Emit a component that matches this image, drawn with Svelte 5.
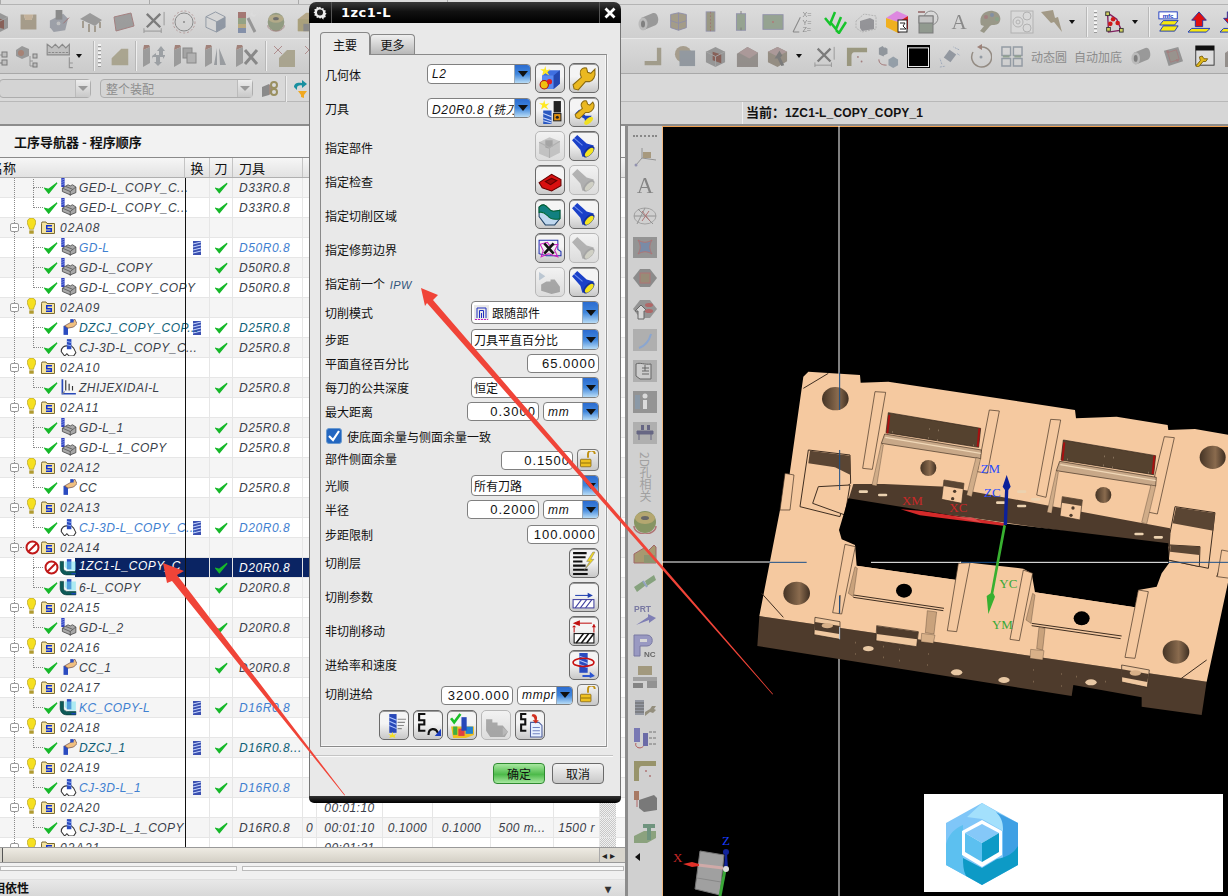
<script>
	// icon shapes, all drawn on a 24x24 box
	const I = {
		cyl: '<path d="M5 8 17 3a4.500 6.500 0 0 1 3 12L8 20z" fill="#8b8b8b"/><ellipse cx="7" cy="14" rx="4.500" ry="6.500" fill="#b5b5b5"/><ellipse cx="7" cy="14" rx="2" ry="3.500" fill="#6b6b6b"/>',
		box: '<path d="M2 3h4l2 7h8l2-7h4v19H2z" fill="#a08d6c"/><path d="M6 3h12l-2 7H8z" fill="#c9a77a"/>',
		info: '<path d="M3 11 17 4l5 5-3 12-12 2-4-5z" fill="#8d93a3"/><rect x="9" y="0" width="7" height="10" fill="#777"/><circle cx="12" cy="14" r="2" fill="#bbb"/><path d="M17 14 23 8" stroke="#a55" fill="none"/>',
		surf: '<path d="M1 9 11 3l12 7-7 6z" fill="#8c8c8c"/><path d="M4 11v7M10 14v8M16 16v6M21 12v6" stroke="#8a7a5a" stroke-width="1.500"/>',
		plane: '<path d="M3 7 20 3l3 13-18 5z" fill="#8f8f8f" stroke="#a66" stroke-width="1"/>',
		xdim: '<path d="M4 4 18 18M18 4 4 18" stroke="#666" stroke-width="2.500"/><path d="M22 2v14M1 22h18M1 19v5M19 19v5" stroke="#888" fill="none"/>',
		circ: '<circle cx="12" cy="12" r="9" fill="none" stroke="#777"/><circle cx="12" cy="12" r="11" fill="none" stroke="#b88" stroke-dasharray="2 2"/><circle cx="12" cy="12" r="1" fill="#777"/>',
		wire: '<path d="M2 7 12 2l10 5v11l-9 5-11-5z" fill="#d6d6d6" stroke="#7a8aa0"/><path d="M13 12 22 7v11l-9 5z" fill="#7a8aa0"/><path d="M2 7l11 5v11" fill="none" stroke="#7a8aa0"/>',
		wand: '<rect x="3" y="2" width="8" height="6" fill="#b05a50"/><rect x="3" y="8" width="8" height="6" fill="#7d9a60"/><rect x="3" y="14" width="8" height="4" fill="#c0a050"/><rect x="3" y="18" width="8" height="5" fill="#6a80b0"/><path d="M13 8 20 22" stroke="#888" stroke-width="3"/><path d="M15 5l2-4 1 4 4-1-3 3" fill="#ddd"/>',
		torus: '<ellipse cx="12" cy="12" rx="10" ry="11" fill="#7f8f60"/><ellipse cx="12" cy="8" rx="9" ry="5" fill="#b0a060"/><ellipse cx="12" cy="8" rx="3.500" ry="2" fill="#555"/><path d="M2 16a10 7 0 0 0 20 0" fill="none" stroke="#a66"/>',
		ocube: '<path d="M2 9 11 2h11v14l-8 6H2z" fill="#b59a60"/><path d="M2 9h12v13H2z" fill="#a5954f"/><path d="M8 14h6v8H8z" fill="#777"/>',
		tree: '<rect x="2" y="2" width="6" height="5" fill="#777"/><path d="M11 5v14h5M11 11h5M11 19h5" fill="none" stroke="#888"/><rect x="16" y="8" width="5" height="5" fill="#bbb" stroke="#666"/><rect x="16" y="16" width="5" height="5" fill="#bbb" stroke="#666"/>',
		tcube: '<path d="M1 6 7 2l7 3v7l-7 3-6-3z" fill="#8a8a8a"/><circle cx="6" cy="9" r="3" fill="#b06a50"/><path d="M15 12v10h3M15 17h3" fill="none" stroke="#888"/><rect x="18" y="10" width="4" height="4" fill="#bbb" stroke="#666"/><rect x="18" y="19" width="4" height="4" fill="#bbb" stroke="#666"/>',
		crown: '<path d="M1 2l4 3 3-3 3 3 3-3 3 3 3-3v9H1z" fill="#bbb" stroke="#777"/><path d="M2 9h17" stroke="#777" stroke-dasharray="2 1"/><path d="M20 13v9h3M20 18h3" fill="none" stroke="#888"/>',
		cham: '<path d="M3 22V14L14 3h8v19z" fill="#a49a72"/>',
		mv: '<path d="M1 6 8 3v16l-7 4z" fill="#8e8e8e"/><path d="M1 6 8 3l-1-2H2z" fill="#a56a5a"/><path d="M10 12 14 9v2h3V7h-2l4-5 4 5h-2v4h2v-2l0 3-2 3v-2h-3v5h2l-4 4-4-4h2v-5h-3v2z" fill="#8d949c"/>',
		cp: '<path d="M1 6 8 3v16l-7 4z" fill="#8e8e8e"/><path d="M1 6 8 3l-1-2H2z" fill="#a56a5a"/><rect x="10" y="4" width="9" height="10" fill="#999" stroke="#777"/><rect x="14" y="9" width="9" height="10" fill="#aaa" stroke="#777"/>',
		mir: '<path d="M1 6 8 3v16l-7 4z" fill="#8e8e8e"/><path d="M1 6 8 3l-1-2H2z" fill="#a56a5a"/><path d="M10 21l3-17v17zM15 4l1 17h6z" fill="#8a9098"/>',
		del: '<path d="M1 6 8 3v16l-7 4z" fill="#8e8e8e"/><path d="M1 6 8 3l-1-2H2z" fill="#a56a5a"/><path d="M10 6 22 20M22 6 10 20" stroke="#777" stroke-width="3"/>',
		xcham: '<path d="M1 2l8 8M9 2l-8 8" stroke="#b77" fill="none"/><path d="M6 23v-9l8-8h8v17z" fill="#a49a72"/>',
		pat: '<path d="M3 4 12 2l9 2v15l-9 3-9-3z" fill="#9d8f6a" stroke="#7a7ab0"/><path d="M12 2v20M3 11l9 3 9-3" stroke="#7a7ab0" fill="none"/>',
		bar: '<rect x="7" y="1" width="10" height="22" fill="#8d8a62" stroke="#8080b0"/><path d="M12 1v22" stroke="#a55" stroke-dasharray="2 2"/>',
		bar2: '<rect x="7" y="3" width="10" height="18" fill="#7f9a78" stroke="#8080b0"/><path d="M12 0v24" stroke="#666" stroke-dasharray="3 15"/>',
		rect: '<rect x="1" y="4" width="22" height="16" fill="#7f9a78" stroke="#8080b0"/><circle cx="12" cy="12" r="1" fill="#c55"/>',
		xyz: '<path d="M1 22 8 8M1 22h6" stroke="#777" fill="none"/><text x="10" y="8" font-size="7" fill="#777" font-family="Liberation Sans">X=</text><text x="10" y="15" font-size="7" fill="#777" font-family="Liberation Sans">Y=</text><text x="10" y="22" font-size="7" fill="#777" font-family="Liberation Sans">Z=</text>',
		checks: '<path d="M2 8l5 6L12 2M8 13l5 6 5-12M13 20l3 3 7-11" fill="none" stroke="#17c42c" stroke-width="2.500"/>',
		ghost: '<path d="M2 11 10 4l12 2v13l-14 3-6-4z" fill="none" stroke="#aaa" stroke-dasharray="2 1"/><path d="M6 11l10-3 4 2v9l-12 2-2-3z" fill="#84848c"/>',
		ccube: '<path d="M1 8 12 1l11 5-10 6z" fill="#dd88e0"/><path d="M1 8l12 4v11L1 17z" fill="#f0b020"/><path d="M13 12 23 6v13l-10 4z" fill="#d02020"/><rect x="13" y="10" width="9" height="12" fill="#fff" stroke="#222"/><path d="M15 13h5l-2 3 3 3h-6" fill="none" stroke="#222"/>',
		shapes: '<path d="M2 2h7" stroke="#a66" stroke-width="2"/><circle cx="15" cy="8" r="7" fill="none" stroke="#777"/><rect x="3" y="6" width="14" height="17" fill="#7d8e7a" stroke="#666"/><rect x="3" y="6" width="14" height="7" fill="#c0c0c0" stroke="#666"/>',
		A: '<text x="12" y="20" text-anchor="middle" font-size="23" fill="#777" font-family="Liberation Serif">A</text>',
		pal: '<path d="M3 15C0 5 8 0 15 1c7 1 9 8 6 12-3 3-7 1-9 3l-6 7-4-2 4-5z" fill="#8c8a6c"/><circle cx="8" cy="7" r="2" fill="#a66"/><circle cx="14" cy="5" r="2" fill="#667fa5"/><circle cx="19" cy="9" r="2" fill="#6a9a6a"/>',
		sheet: '<rect x="1" y="1" width="22" height="22" fill="#dadada" stroke="#aaa"/><circle cx="8" cy="12" r="5" fill="none" stroke="#aaa"/><circle cx="8" cy="12" r="2" fill="none" stroke="#aaa"/><circle cx="17" cy="6" r="4" fill="none" stroke="#aaa"/><circle cx="17" cy="18" r="4" fill="none" stroke="#aaa"/>',
		bolt: '<path d="M1 2 13 0l2 8 3-1 4 15-8-10-3 1z" fill="#9a8a64"/>',
		spline: '<path d="M5 2 15 9l5 12-14 2z" fill="none" stroke="#802060" stroke-width="1.500"/><rect x="3" y="1" width="4" height="4" fill="#d0d060" stroke="#333"/><rect x="4" y="18" width="4" height="4" fill="#d0d060" stroke="#333"/><rect x="18" y="19" width="4" height="4" fill="#d0d060" stroke="#333"/><circle cx="11" cy="9" r="2.500" fill="#d01818"/><circle cx="16" cy="13" r="2.500" fill="#d01818"/><circle cx="8" cy="14" r="2.500" fill="#d01818"/>',
		mfc: '<rect x="1" y="1" width="21" height="8" fill="#fff" stroke="#1030c0"/><text x="11.500" y="8" text-anchor="middle" font-size="7" font-weight="bold" fill="#1030c0" font-family="Liberation Sans">mfc</text><path d="M6 11h17l-4 5H2zM6 17h17l-4 6H2z" fill="#f6e810" stroke="#1030c0"/>',
		up: '<path d="M12 1 20 10h-4v7H8v-7H4z" fill="#e01010" stroke="#2030a0"/><path d="M4 19h20l-4 4H0z" fill="#f6e810" stroke="#1030c0"/>',
		dn: '<path d="M8 1h8v7h4l-8 9-8-9h4z" fill="#e01010" stroke="#2030a0"/><path d="M4 19h20l-4 4H0z" fill="#f6e810" stroke="#1030c0"/>',
		L: '<path d="M17 2h5v20H3v-5h14z" fill="#9a9070"/>',
		disc: '<circle cx="10" cy="10" r="9" fill="#a09070"/><rect x="6" y="6" width="17" height="17" fill="#7f8c9a"/>',
		rcube: '<path d="M2 7 12 2l10 5v11l-10 5-10-5z" fill="#888"/><path d="M9 7l9 3v9l-9-3z" fill="#8a4030"/><path d="M2 7l10 5v11M22 7l-10 5" stroke="#999" fill="none"/>',
		wr: '<path d="M2 7 12 2l10 5v10l-10 6-10-5z" fill="#8a7c68"/><path d="M12 2l10 5-10 5-10-5z" fill="#a88"/><path d="M14 6l3 5-2 2 4 8-3 1-4-8-3 0z" fill="#666"/>',
		corner: '<path d="M1 3h22v5H9c-2 0-3 2-3 4v11H1z" fill="#8f8a5a"/><circle cx="13" cy="13" r="1" fill="#a66"/><circle cx="17" cy="18" r="1" fill="#a66"/>',
		swap: '<path d="M3 3l4-2 3 4-2 7-5-2zM9 2l3 2 0 5-4 2z" fill="#7d8894"/><path d="M13 15l5-3 5 3v6l-5 3-5-3z" fill="#8094a6"/><path d="M3 15c0 5 4 6 8 6" stroke="#a55" fill="none"/>',
		blk: '<rect x="0" y="0" width="24" height="24" fill="#000"/><rect x="1.500" y="3" width="21" height="19.500" fill="#000" stroke="#fff"/>',
		diam: '<path d="M12 5l7 5-6 8-7-5z" fill="#808a9a"/><path d="M4 20l-2-6M22 5l-6-3M20 9l3 2M2 23l6-1" stroke="#8aa0c0" stroke-dasharray="2 1" fill="none"/>',
		rot: '<path d="M14 3a10 10 0 1 1-9 5" fill="none" stroke="#8a7a6a" stroke-width="1.500"/><path d="M14 0v6l-5-3z" fill="#a06a5a"/><circle cx="13" cy="13" r="1.500" fill="#7f8f9f"/>',
		quad: '<path d="M2 2h9v9H2zM14 2h9v9h-9zM2 14h9v8H2zM14 14h9v8h-9z" fill="none" stroke="#7f8f9f" stroke-width="1.500"/><path d="M3 11h7v2H3zM15 11h7v2h-7z" fill="#7a9a7a"/>',
		stud: '<path d="M3 6 18 2l5 15-15 5z" fill="#858585"/><path d="M7 8l9-3 3 10-9 3z" fill="#8d8478" stroke="#a66"/><circle cx="7" cy="7" r="1.500" fill="#a66"/><circle cx="17" cy="16" r="1.500" fill="#a66"/>',
		wrwin: '<rect x="3" y="1" width="20" height="21" fill="#ddd" stroke="#333"/><rect x="3" y="1" width="20" height="5" fill="#111"/><path d="M3 23l5-6-1-4 3-1 2 3 4 0-2 3h-3l-5 6z" fill="#e0b818" stroke="#7a6010"/>',
		cubehalf: '<path d="M2 9 13 2l11 6v15H2z" fill="#887f78"/><path d="M13 2l11 6-9 6L4 8z" fill="#a88"/>',
		axes: '<path d="M3 20 9 13l14 2M9 13V3" stroke="#888" fill="none"/><rect x="10" y="7" width="8" height="6" fill="#a09070"/><circle cx="3" cy="20" r="1.500" fill="#88a"/>',
		arc: '<ellipse cx="12" cy="12" rx="11" ry="8" fill="none" stroke="#999"/><path d="M1 12h22M12 4 4 20M5 5l15 15" stroke="#888" fill="none"/><path d="M9 7l8 10M16 7l-7 10" stroke="#a66"/>',
		xsq: '<rect x="0" y="2" width="24" height="21" fill="#8a8a8a"/><path d="M5 5c5 3 9 3 14 0-3 5-3 9 0 14-5-3-9-3-14 0 3-5 3-9 0-14z" fill="#6a80a0" stroke="#a66"/>',
		hexp: '<path d="M0 12 7 3h10l7 9-7 9H7z" fill="#7f7f7f"/><rect x="7" y="7" width="10" height="10" fill="#8f7f68" stroke="#a66"/>',
		hexh: '<path d="M0 12 7 3h10l7 9-7 9H7z" fill="#8a8a8a"/><path d="M5 22V14l-3 0 6-6 6 6h-3v8z" fill="#d8d8d8" stroke="#555"/><ellipse cx="16" cy="8" rx="4" ry="2" fill="#a55"/><ellipse cx="16" cy="14" rx="4" ry="2" fill="#a55"/>',
		sq1: '<rect x="0" y="1" width="24" height="22" fill="#aaa"/><path d="M6 20c6-2 10-7 12-14" stroke="#7f9fd0" stroke-width="2" fill="none"/>',
		doc: '<rect x="0" y="1" width="24" height="22" fill="#aaa"/><path d="M3 5c4-2 8 1 15 0v15H7l-4-3z" fill="#ccc" stroke="#555"/><path d="M9 9h7M9 12h7M9 15h7M12 6v6" stroke="#555"/>',
		sqi: '<rect x="0" y="1" width="24" height="22" fill="#8a8a8a"/><circle cx="12" cy="6" r="2.500" fill="#ddd"/><rect x="10" y="10" width="4" height="9" fill="#ddd"/><path d="M2 5h5v14H2z" fill="#8090a0"/>',
		tbl: '<rect x="0" y="1" width="24" height="22" fill="#aaa"/><path d="M4 10h16v3H4zM6 13v6M18 13v6" fill="#557" stroke="#557"/><rect x="8" y="4" width="3" height="5" fill="#557"/><rect x="14" y="4" width="3" height="5" fill="#557"/>',
		tor2: '<ellipse cx="12" cy="12" rx="11" ry="11" fill="#7a8a50"/><ellipse cx="12" cy="8" rx="10" ry="6" fill="#b0a060"/><ellipse cx="12" cy="8" rx="4" ry="2" fill="#555"/><path d="M1 16a11 8 0 0 0 22 0" fill="none" stroke="#a66" stroke-width="1.500"/>',
		cube2: '<path d="M1 13l10-6 4 3 6-6 2 2v16H1z" fill="#a09060" stroke="#955"/><path d="M11 14h12v8H11z" fill="#7f8a60"/>',
		link: '<path d="M1 15l9-6 3 4-9 7z" fill="#7a9a70"/><path d="M12 9l9-6 2 5-9 6z" fill="#7a9a70"/><path d="M10 9l4 6" stroke="#889cc0" stroke-width="2"/>',
		prt: '<text x="1" y="9" font-size="8.500" font-weight="bold" fill="#6a6a9a" font-family="Liberation Sans">PRT</text><path d="M3 22 15 14v-3l8 4-7 5v-3z" fill="#7070b0"/>',
		pnc: '<path d="M1 1h13c7 0 7 11 0 11H7v10H1z" fill="#9090c0" stroke="#6a6a9a"/><rect x="7" y="5" width="7" height="3" fill="#d8d8d8"/><text x="11" y="23" font-size="8" font-weight="bold" fill="#555" font-family="Liberation Sans">NC</text>',
		mach: '<rect x="5" y="1" width="14" height="9" fill="#9a9070"/><rect x="0" y="12" width="24" height="4" fill="#999"/><rect x="0" y="18" width="10" height="5" fill="#777"/><rect x="14" y="16" width="10" height="7" fill="#888"/>',
		toolw: '<path d="M2 4h9v15H2z" fill="#8a8f9a"/><path d="M2 7h9M2 10h9M2 13h9M2 16h9" stroke="#555"/><path d="M12 16l5-3 2-3 4 0-2 3 2 1-3 3-3-1-5 4z" fill="#8a8470"/>',
		bars: '<rect x="1" y="1" width="6" height="14" fill="#6a6ab0"/><path d="M3 16c-2 5 6 7 8 2" stroke="#a44" fill="none"/><rect x="10" y="6" width="5" height="13" fill="#5a5aa0"/><path d="M16 5h7M16 11h7M16 17h7" stroke="#666" stroke-dasharray="3 1"/>',
		mill: '<rect x="1" y="2" width="5" height="9" fill="#a06a50"/><path d="M4 11v7" stroke="#a55"/><path d="M6 11 21 6l3 3v12l-13 2-5-4z" fill="#6a6a6a"/>',
		ttool: '<path d="M1 16l10-5h12v7l-9 5H1z" fill="#7f9a70"/><path d="M10 4h12v4h-4v12h-4V8h-4z" fill="#5f8a70"/>',
		/* dialog buttons */
		geo: '<path d="M4 9 10 4h11v13l-6 5H4z" fill="#3f6fe0"/><path d="M4 9h11v13H4z" fill="#5a8af0"/><path d="M15 9l6-5v13l-6 5z" fill="#2448b0"/><circle cx="6" cy="18" r="4" fill="#f0c010" stroke="#b01010"/><circle cx="11" cy="15" r="2.500" fill="#e02020"/><path d="M7 0l1 4 4-1-3 3 2 3-4-2-3 2 1-4-3-2h4z" fill="#ffe820"/>',
		wrench: '<path d="M22 3l-4 4-3-1-1-4c-4-1-7 2-6 6l1 3L1 18l1 4 4 1 7-8 4 0c3-1 6-5 5-9z" fill="#eab820" stroke="#8a6a10"/>',
		tool: '<path d="M5 10h8v13H5z" fill="#2b59c0"/><path d="M5 13l8 3M5 17l8 3M5 20l8 2" stroke="#c8d8ff"/><rect x="15" y="1" width="7" height="11" fill="#222"/><rect x="15" y="13" width="7" height="7" fill="#e09010" stroke="#222"/><circle cx="18.500" cy="16.500" r="1.500" fill="#222"/><path d="M6 0l1 4 4-1-3 3 2 3-4-2-3 2 1-4-3-2h4z" fill="#ffe820"/>',
		wrfl: '<path d="M3 13 7 9l6 6 6 0-6 8-1-5z" fill="#1a40c0"/><ellipse cx="16" cy="20" rx="5" ry="2.500" transform="rotate(-40 16 20)" fill="#f0e020"/><path d="M20 2l-3 3-2-1-1-3c-3-1-6 2-5 5l1 2-7 6 1 3 3 1 6-6 3 0c3-1 6-4 5-8z" fill="#eab820" stroke="#8a6a10"/>',
		block: '<path d="M2 8l10-5 10 4v11l-10 5-10-4z" fill="#b5b5b5"/><path d="M8 6h7v6l-4 2-3-1z" fill="#888"/><path d="M2 8l10 5 10-6M12 13v10" stroke="#999" fill="none"/>',
		fl: '<path d="M1 6 6 1l9 8 7 2-11 11-2-7z" fill="#1a40c8"/><path d="M3 4l8 7" stroke="#7090f0"/><ellipse cx="17" cy="17" rx="7" ry="3.500" transform="rotate(-45 17 17)" fill="#14309a"/><ellipse cx="17.500" cy="17.500" rx="5.500" ry="2.500" transform="rotate(-45 17.500 17.500)" fill="#f4e420"/>',
		floff: '<path d="M1 6 6 1l9 8 7 2-11 11-2-7z" fill="#9a9a9a"/><ellipse cx="17" cy="17" rx="7" ry="3.500" transform="rotate(-45 17 17)" fill="#8a8a8a"/><ellipse cx="17.500" cy="17.500" rx="5.500" ry="2.500" transform="rotate(-45 17.500 17.500)" fill="#c8c8b8"/>',
		redp: '<path d="M2 14 14 6l9 5v6l-9 5-9-3z" fill="#d81010" stroke="#600"/><path d="M8 13l6-3 5 2-6 4z" fill="#a00808" stroke="#600"/>',
		area: '<path d="M2 14V5c4-4 6-2 9 1 3 4 6 3 11 2v8l-5 6H8z" fill="#c0d8ef" stroke="#246"/><path d="M2 5c4-4 6-2 9 1 3 4 6 3 11 2v8c-4 1-9 1-12-3-3-3-5-4-8-3z" fill="#118080" stroke="#063"/>',
		trim: '<path d="M2 4h18v9l3 2v4H9l-7-2z" fill="none" stroke="#2030b0"/><path d="M3 8l7-2 2 3 8-1-3 6 3 6-9-3-7 3 2-6z" fill="none" stroke="#d020c0"/><path d="M7 7l9 10M16 7 7 17" stroke="#111" stroke-width="2.500"/>',
		ipw: '<path d="M4 14l5-3h4v-2h4l5 7v5l-8 2-10-3z" fill="#8c8c8c"/><path d="M2 2l6 4-6 4z" fill="#a8b8c8"/>',
		layer: '<path d="M2 2h13M2 6h12M2 10h9M2 14h12M2 18h14M2 22h14" stroke="#111" stroke-width="2"/><path d="M21 1l-6 9h3l-5 8 9-10h-3l4-7z" fill="#f2d820" stroke="#777" stroke-width=".5"/>',
		param: '<path d="M4 10h14" stroke="#2040b0"/><path d="M16 7.500 21 10l-5 2.500z" fill="#2040b0"/><rect x="2" y="14" width="20" height="8" fill="#fff" stroke="#4040a0"/><path d="M4 22l6-8M9 22l6-8M14 22l6-8" stroke="#4040a0"/>',
		nocut: '<path d="M6 4h14" stroke="#c01010"/><path d="M3 4l5-2v4zM3 13V8M22 13V5" stroke="#c01010" fill="#c01010"/><path d="M1 8l2-2 2 2zM20 8l2-3 2 3z" fill="#c01010"/><rect x="3" y="14" width="19" height="9" fill="#fff" stroke="#111"/><path d="M5 23l7-9M10 23l7-9M15 23l7-9" stroke="#111" stroke-width="1.500"/>',
		feed: '<rect x="8" y="0" width="8" height="19" fill="#2a4cc0"/><path d="M8 3l8 3M8 7l8 3M8 11l8 3" stroke="#b0c8ff"/><ellipse cx="12" cy="9" rx="10" ry="4" fill="none" stroke="#c81010" stroke-width="1.500"/><path d="M11 21h7l0-3 5 4-5 2v-1h-7z" fill="#2c55d0"/>',
		lock: '<path d="M8 11V6a4.500 4.500 0 0 1 9 0" fill="none" stroke="#c09010" stroke-width="2.500" transform="translate(4 -2)"/><rect x="2" y="11" width="14" height="10" rx="1" fill="#eec020" stroke="#806010"/><rect x="2" y="15" width="14" height="2" fill="#b08a10"/>',
		gen: '<rect x="7" y="1" width="7" height="18" fill="#2848b8"/><path d="M7 4l7 3M7 8l7 3M7 12l7 3" stroke="#b0c8ff"/><path d="M15 6h8M15 9h7M15 12h6M15 15h4" stroke="#888"/><path d="M10 18l1 3 3-1-2 2 1 2-3-1-3 1 1-2-2-2 3 1z" fill="#f4e020"/>',
		replay: '<path d="M9 1H3v6h5v4H3v6h6" fill="none" stroke="#111" stroke-width="2"/><path d="M12 21c0-7 7-7 9-2" fill="none" stroke="#111" stroke-width="2"/><path d="M24 15v7h-6z" fill="#1a3cc0"/>',
		verify: '<path d="M1 13h22v8l-8 3H3z" fill="#f0c020"/><rect x="3" y="13" width="4" height="8" fill="#40b040"/><rect x="8" y="15" width="6" height="7" fill="#e04040"/><rect x="15" y="13" width="7" height="7" fill="#2080d0"/><rect x="11" y="4" width="5" height="13" fill="#2848b8"/><path d="M1 5l3 4 6-8" fill="none" stroke="#19c028" stroke-width="2.500"/>',
		stair: '<path d="M2 6h6v3h5v3h5l5 6-3 5H6l-4-6z" fill="#8e8e8e"/><path d="M18 14l5 4-5 4z" fill="#a8a8a8"/>',
		sdoc: '<path d="M8 1H3v5h4v5H3v6h5" fill="none" stroke="#111" stroke-width="2"/><path d="M12 9h8l3 3v11H12z" fill="#e8f0ff" stroke="#5060a0"/><path d="M14 14h7M14 17h7M14 20h7" stroke="#7080c0"/><path d="M14 1c4 0 5 3 4 6l2 0-3 3-3-3h2c0-2-1-4-3-4z" fill="#d03020"/>'
	};

	// items on a toolbar: left edge and icon size, the gap before each one is derived
	const it = (i, l, w = 24, on = false) => ({ i, l, w, on });
	const sep = (l) => ({ sep: true, l, w: 1 });
	const drop = (l) => ({ drop: true, l, w: 7 });
	const txt = (t, l, w) => ({ t, l, w });
	const flow = (items) => {
		let x = 0;
		return items.map((o) => {
			const gap = o.l - x;
			x = o.l + o.w;
			return { ...o, gap };
		});
	};

	const bar1 = flow([
		it('rcube', -14), it('box', 19, 19), it('info', 47, 23), it('surf', 79), it('plane', 111), it('xdim', 143, 23), it('circ', 172), it('wire', 204, 23), it('wand', 235), it('torus', 266, 20), it('ocube', 296, 22),
		it('cyl', 636), it('pat', 668, 21), it('bar', 700, 21), it('bar2', 730, 22), it('rect', 762, 22), it('xyz', 792, 25), it('checks', 823, 24, true), it('ghost', 854), it('ccube', 885, 24, true), it('shapes', 916), it('A', 948, 22), it('pal', 978), it('sheet', 1010), it('bolt', 1040), drop(1069), sep(1081), { dots: true, l: 1088, w: 3 }, it('spline', 1097, 22, true), drop(1126), sep(1137), it('mfc', 1146, 21, true), it('up', 1176, 22, true), it('dn', 1208, 22, true)
	]);
	const bar2 = flow([
		it('tree', -14), it('tcube', 15, 24), it('crown', 46, 28), drop(76), sep(88), { dots: true, l: 92, w: 3 }, it('cham', 103, 21), sep(130), it('mv', 136), it('cp', 167), it('mir', 198), it('del', 229), sep(260), it('xcham', 267), it('xcham', 298),
		it('L', 636, 21), it('disc', 668, 22), it('rcube', 698, 23), it('cubehalf', 729, 23), it('wr', 760, 23), drop(790), it('xdim', 802, 22), it('corner', 834, 22), it('swap', 864, 23), it('blk', 895, 23, true), it('diam', 926, 23), it('rot', 956, 24), it('quad', 988, 23),
		txt('动态圆', 1019, 36), txt('自动加底', 1062, 48), it('cyl', 1117, 23), it('stud', 1149, 23), it('wrwin', 1181, 22, true), it('cubehalf', 1211, 24)
	]);

	const side = ['axes', 'A', 'arc', 'xsq', 'hexp', 'hexh', 'sq1', 'doc', 'sqi', 'tbl', '2D孔相关', 'tor2', 'cube2', 'link', 'prt', 'pnc', 'mach', 'toolw', 'bars', 'corner', 'mill', 'ttool'];

	// operation navigator
	const op = (n, ic, t, extra = {}) => ({ n, ic, t, ...extra });
	const grp = (g, extra = {}) => ({ g, ...extra });
	const rows = [
		op('GED-L_COPY_C...', 'ged', 'D33R0.8', { more: true }),
		op('GED-L_COPY_C...', 'ged', 'D33R0.8'),
		grp('02A08'),
		op('GD-L', 'ged', 'D50R0.8', { blue: true, sw: true, more: true }),
		op('GD-L_COPY', 'ged', 'D50R0.8', { more: true }),
		op('GD-L_COPY_COPY', 'ged', 'D50R0.8'),
		grp('02A09'),
		op('DZCJ_COPY_COP...', 'hand', 'D25R0.8', { teal: true, sw: true, more: true }),
		op('CJ-3D-L_COPY_C...', 'bell', 'D25R0.8'),
		grp('02A10'),
		op('ZHIJEXIDAI-L', 'zig', 'D25R0.8'),
		grp('02A11'),
		op('GD-L_1', 'ged', 'D25R0.8', { more: true }),
		op('GD-L_1_COPY', 'ged', 'D25R0.8'),
		grp('02A12'),
		op('CC', 'hand', 'D25R0.8'),
		grp('02A13'),
		op('CJ-3D-L_COPY_C...', 'bell', 'D20R0.8', { blue: true, sw: true }),
		grp('02A14', { stop: true }),
		op('1ZC1-L_COPY_C', 'pock', 'D20R0.8', { sel: true, stop: true, more: true }),
		op('6-L_COPY', 'pock', 'D20R0.8'),
		grp('02A15'),
		op('GD-L_2', 'ged', 'D20R0.8'),
		grp('02A16'),
		op('CC_1', 'hand', 'D20R0.8'),
		grp('02A17'),
		op('KC_COPY-L', 'pock', 'D16R0.8', { blue: true, sw: true }),
		grp('02A18'),
		op('DZCJ_1', 'hand', 'D16R0.8...', { teal: true, sw: true }),
		grp('02A19'),
		op('CJ-3D-L_1', 'bell', 'D16R0.8', { blue: true, sw: true }),
		grp('02A20', { time: '00:01:10' }),
		op('CJ-3D-L_1_COPY', 'bell', 'D16R0.8', { cols: ['0', '00:01:10', '0.1000', '0.1000', '500 m...', '1500 r'] }),
		grp('02A21', { time: '00:01:31' })
	];

	const N = {
		ged: '<path d="M2 0h3v8H2z" fill="#3040c0"/><path d="M2 2l3-1M2 4l3-1M2 6l3-1" stroke="#b0c8ff" stroke-width=".5"/><path d="M3 9l5-3 2 1 2-1 3 2v5l-5 2-7-3z" fill="#a8a8a8" stroke="#444" stroke-width=".7"/><path d="M3 9l7 3 5-4M10 12v4M6 7.500l6 2.500" stroke="#444" fill="none" stroke-width=".6"/>',
		hand: '<path d="M4 7h4v8H4z" fill="#2a4bc0"/><path d="M5 7l7-4 2-2 2 4-3 3-5 1z" fill="#f0c080" stroke="#644" stroke-width=".6"/><rect x="10" y="1" width="3" height="3" fill="#2a4bc0"/>',
		bell: '<path d="M2 12c0-4 3-5 5-5l3-1 3 3 2 4-2 3H9l-2-2-2 2z" fill="#fff" stroke="#333" stroke-width=".9"/><rect x="7" y="1" width="4" height="9" fill="#2a4bc0"/><path d="M7 3l4 1M7 6l4 1" stroke="#b0c8ff" stroke-width=".7"/>',
		pock: '<path d="M1 3h3v6c0 2 2 3 4 3h7v3H7c-4 0-6-3-6-6z" fill="#0d5a58" stroke="#033" stroke-width=".5"/><rect x="7" y="1" width="4" height="9" fill="#2a4bc0"/><path d="M5 3h10v8H9l-4-3z" fill="#70e0f0" opacity=".55"/><path d="M11 14h4" stroke="#2040d0"/>',
		zig: '<path d="M3 1v13h12" fill="none" stroke="#2848b8" stroke-width="1.500"/><path d="M6 2v9M9 5v6M12 7v4" stroke="#333"/><path d="M3 14l2-2" stroke="#888"/>'
	};
	const B = {
		geo: [{ i: 'geo' }, { i: 'wrench' }], tool: [{ i: 'tool' }, { i: 'wrfl' }],
		part: [{ i: 'block', off: true }, { i: 'fl' }], check: [{ i: 'redp' }, { i: 'floff', off: true }],
		area: [{ i: 'area' }, { i: 'fl' }], trim: [{ i: 'trim' }, { i: 'floff', off: true }], ipw: [{ i: 'ipw', off: true }, { i: 'fl' }]
	};
	const bottoms = [{ i: 'gen' }, { i: 'replay' }, { i: 'verify' }, { i: 'stair', off: true }, { i: 'sdoc' }];
</script>

{#snippet ico(name, size = 24)}
	<svg class="ico" viewBox="0 0 24 24" width={size} height={size}>{@html I[name]}</svg>
{/snippet}

{#snippet tb(items)}
	{#each items as o}
		{#if o.sep}
			<i class="tsep" style:margin-left="{o.gap}px"></i>
		{:else if o.dots}
			<i class="tdots" style:margin-left="{o.gap}px"></i>
		{:else if o.drop}
			<i class="tdrop" style:margin-left="{o.gap}px"></i>
		{:else if o.t}
			<span class="ttxt" style:margin-left="{o.gap}px" style:width="{o.w}px">{o.t}</span>
		{:else}
			<span class="tico" class:on={o.on} style:margin-left="{o.gap}px">{@render ico(o.i, o.w)}</span>
		{/if}
	{/each}
{/snippet}

{#snippet arrowbox()}<b class="ar"><i></i></b>{/snippet}

{#snippet combo(value, ital = false, icon = false)}
	<div class="cb" class:ital>
		<span class="cbv">
			{#if icon}
				<svg width="15" height="15" viewBox="0 0 15 15"><rect x="0" y="0" width="15" height="15" fill="#c8c8c8" opacity=".4"/><path d="M3 13V3h9v10M5.500 13V5.500h4V13M7.500 13V8" fill="none" stroke="#2030c0"/><path d="M1 14.500h13" stroke="#c020c0" stroke-dasharray="2 1"/></svg>
			{/if}
			{value}
		</span>
		{@render arrowbox()}
	</div>
{/snippet}

{#snippet ib(b)}
	<button class="ib" class:off={b.off}>{@render ico(b.i, 25)}</button>
{/snippet}

{#snippet lockb()}
	<button class="lock">{@render ico('lock', 18)}</button>
{/snippet}

<div class="app">
	<header>
		<div class="topstrip"><i></i><i></i><i></i><i></i></div>
		<div class="bar r1">{@render tb(bar1)}</div>
		<div class="bar r2">{@render tb(bar2)}</div>
		<div class="addr">
			<div class="ac a1"><b class="da"></b></div>
			<div class="ac a2"><span>整个装配</span><b class="da"></b></div>
			<svg class="ai" width="18" height="18" viewBox="0 0 18 18"><path d="M1 7l7-3v11l-7 2z" fill="#8a8a8a"/><path d="M8 4l3 3v6l-3 2z" fill="#a08a80"/><circle cx="13" cy="5" r="3" fill="none" stroke="#9a9060" stroke-width="2"/><circle cx="13" cy="12" r="3" fill="none" stroke="#9a9060" stroke-width="2"/></svg>
			<i class="asep"></i>
			<svg class="ai2" width="18" height="18" viewBox="0 0 18 18"><path d="M2 7c0-4 4-5 8-4V0l5 4-5 4V5.500C7 5 5 6 5 8v2z" fill="#1890a0"/><path d="M6 11h9l-3 4v3l-3-1v-2z" fill="#f0a820"/></svg>
		</div>
		<div class="cur"><span>当前：<em>1ZC1-L_COPY_COPY_1</em></span></div>
	</header>

	<div class="work">
		<section class="nav">
			<h2>工序导航器 - 程序顺序</h2>
			<div class="grid head">
				<span class="nm">名称</span><span>换</span><span>刀</span><span class="lft">刀具</span><span></span><span></span><span></span><span></span><span></span><span></span><span></span>
			</div>
			<div class="body">
				{#each rows as r, idx}
					<div class="grid row" class:alt={idx % 2 === 0} class:sel={r.sel} class:blue={r.blue} class:teal={r.teal}>
						<div class="nm tree">
							{#if r.g}
								<i class="exp"></i><i class="dash"></i>
								{#if r.stop}
									<svg class="st" width="15" height="15" viewBox="0 0 15 15"><circle cx="7.500" cy="7.500" r="6" fill="#fff" stroke="#c01818" stroke-width="2"/><path d="M3.500 11.500l8-8" stroke="#c01818" stroke-width="2"/></svg>
								{:else}
									<svg class="bulb" width="9" height="18" viewBox="0 0 8 16"><path d="M4 0a3.800 3.800 0 0 1 3.800 4c0 2-1.500 3-2 6H2.200C1.700 7 .2 6 .2 4A3.800 3.800 0 0 1 4 0z" fill="#f6e020" stroke="#a08a10" stroke-width=".5"/><rect x="2" y="11" width="4" height="3" fill="#b09a30"/></svg>
								{/if}
								<svg class="fold" width="14" height="13" viewBox="0 0 14 13"><path d="M.5 2.500V12.500h13V2.500H6L5 1H1z" fill="#f3e3a0" stroke="#7a6a30"/><path d="M5 4h6v1.500H6.500v1.500H11v4H5V9.500h4.500V8.500H5z" fill="#1030d0"/></svg>
								<span class="t gt">{r.g}</span>
							{:else}
								<i class="elbow" class:cont={r.more}></i>
								{#if r.stop}
									<svg class="st2" width="15" height="15" viewBox="0 0 15 15"><circle cx="7.500" cy="7.500" r="6" fill="#fff" stroke="#c01818" stroke-width="2"/><path d="M3.500 11.500l8-8" stroke="#c01818" stroke-width="2"/></svg>
								{:else}
									<svg class="ck" width="14" height="12" viewBox="0 0 15 13"><path d="M1 7l4 5L14 1 5 8z" fill="#16b82a" stroke="#16b82a" stroke-width="1.500"/></svg>
								{/if}
								<svg class="opi" width="18" height="18" viewBox="0 0 16 16">{@html N[r.ic]}</svg>
								<span class="t">{r.n}</span>
							{/if}
						</div>
						<div class="c">
							{#if r.sw}
								<svg width="8" height="14" viewBox="0 0 8 14"><rect width="8" height="14" fill="#3a4fb0"/><path d="M0 3l8-2M0 6l8-2M0 9l8-2M0 12l8-2" stroke="#c8d8ff"/></svg>
							{/if}
						</div>
						<div class="c">
							{#if !r.g}
								<svg width="13" height="12" viewBox="0 0 15 13"><path d="M1 7l4 5L14 1 5 8z" fill="#16b82a" stroke="#16b82a" stroke-width="1.500"/></svg>
							{/if}
						</div>
						<div class="c lft"><span class="t">{r.t ?? ''}</span></div>
						{#if r.cols}
							{#each r.cols as v}<div class="c"><span class="t">{v}</span></div>{/each}
						{:else}
							<div class="c"></div>
							<div class="c"><span class="t">{r.time ?? ''}</span></div>
							<div class="c"></div><div class="c"></div><div class="c"></div><div class="c"></div>
						{/if}
						<div class="hatch"></div><span></span>
					</div>
				{/each}
				<i class="vline"></i>
			</div>
			<div class="hs"><i class="thumb"></i><b>◂</b><b>▸</b></div>
			<div class="split"><i></i><i></i></div>
			<div class="dep"><span>相依性</span><b>▾</b></div>
		</section>

		<aside class="strip">
			<i class="grip"></i>
			{#each side as s, k}
				{#if I[s]}
					<span class="si" class:first={k === 0} class:second={k === 1}>{@render ico(s, 24)}</span>
				{:else}
					<span class="vt">{s}</span>
				{/if}
			{/each}
			<i class="tri"></i>
		</aside>

		<main class="view">
			<svg class="scene" width="566" height="770" viewBox="662 126 566 770">
				<defs>
					<linearGradient id="hole"><stop offset="0" stop-color="#453425"/><stop offset=".6" stop-color="#8a6b4e"/><stop offset="1" stop-color="#3f2f22"/></linearGradient>
				</defs>
				<path d="M839 126V896M662 562H1228" stroke="#fff"/>
				<g transform="translate(740 360) scale(.33333)" stroke-linejoin="round">
					<path d="M58 768 52 858 995 1008 1000 975 1205 1012 1205 1040 1385 1065 1400 965z" fill="#4e3b2c"/>
					<path d="M205 35 360 45 362 68 445 65 1005 150 1008 175 1130 170 1283 195 1285 210 1365 207 1470 225 1470 640 1400 965 58 768 120 450 135 440 190 50z" fill="#f5c9a0"/>
					<path d="M190 85 265 40M65 700 130 772M1320 958 1400 900M1430 650 1450 600" stroke="#3e2d20" stroke-width="3" fill="none"/>
					<path d="M1445 570 1470 575 1470 655 1432 650z" fill="#f5c9a0" stroke="#3e2d20" stroke-width="2"/>
					<path d="M135 340 162 345 150 450 120 450z" fill="#f5c9a0" stroke="#3e2d20" stroke-width="2"/>

					<!-- corner pockets -->
					<path d="M205 270 330 285 332 370 320 380 300 470 180 440z" fill="#f5c9a0" stroke="#3e2d20" stroke-width="3"/>
					<path d="M210 272 330 287 332 345 285 322 205 310z" fill="#5a4533"/>
					<path d="M235 380 330 375 315 465 218 430z" fill="#f5c9a0" stroke="#3e2d20" stroke-width="3"/>
					<path d="M1305 440 1425 458 1405 625 1285 600 1290 520z" fill="#f5c9a0" stroke="#3e2d20" stroke-width="3"/>
					<path d="M1308 442 1425 460 1420 512 1298 490z" fill="#5a4533"/>
					<path d="M1290 555 1380 560 1378 620 1285 600z" fill="#f5c9a0" stroke="#3e2d20" stroke-width="3"/>
					<path d="M1292 555 1380 560 1378 585 1290 575z" fill="#5a4533"/>

					<!-- band behind the opening and the opening itself -->
					<path d="M340 372 432 372 620 380 1290 505 1290 560 325 420z" fill="#4e3b2c"/>
					<path d="M325 415 790 490 1285 550 1287 610 1265 640 1250 680 1195 690 1185 742 885 697 875 640 850 626 690 608 660 605 650 660 350 617 345 555 305 538 297 510z" fill="#000"/>

					<!-- ledges by the opening -->
					<path d="M350 617 650 660 630 745 340 705z" fill="#f5c9a0"/>
					<path d="M885 697 1185 742 1165 830 875 790z" fill="#f5c9a0"/>
					<path d="M340 705 612 745M340 712 610 752M875 790 1145 828M875 797 1142 836" stroke="#3e2d20" stroke-width="3" fill="none"/>
					<path d="M345 620 325 700 340 710 352 625z" fill="#c9a27c" stroke="#3e2d20"/>
					<path d="M878 700 858 780 873 790 885 705z" fill="#c9a27c" stroke="#3e2d20"/>
					<path d="M655 610 690 608 650 815 622 812z" fill="#f5c9a0" stroke="#3e2d20" stroke-width="2"/>
					<path d="M850 630 878 640 838 842 810 838z" fill="#f5c9a0" stroke="#3e2d20" stroke-width="2"/>
					<path d="M1195 690 1225 695 1185 895 1155 892z" fill="#f5c9a0" stroke="#3e2d20" stroke-width="2"/>
					<path d="M315 553 346 560 305 762 278 758z" fill="#f5c9a0" stroke="#3e2d20" stroke-width="2"/>
					<path d="M300 705 298 760" stroke="#3e2d20" stroke-width="3"/>

					<!-- slots -->
					<path d="M405 95 437 97 397 328 368 325z" fill="#f5c9a0" stroke="#3e2d20" stroke-width="2"/>
					<path d="M748 150 778 153 742 340 712 335z" fill="#f5c9a0" stroke="#3e2d20" stroke-width="2"/>
					<path d="M932 178 962 180 918 412 890 405z" fill="#f5c9a0" stroke="#3e2d20" stroke-width="2"/>
					<path d="M1273 230 1303 233 1252 462 1218 455z" fill="#f5c9a0" stroke="#3e2d20" stroke-width="2"/>

					<!-- floors with the two long pockets -->
					{#each [[0, 0], [525, 82]] as [dx, dy]}
						<g transform="translate({dx} {dy})">
							<path d="M445 158 722 205 716 262 438 218z" fill="#55422f" stroke="#2c2016" stroke-width="2"/>
							<path d="M448 165 442 220M718 205 713 260" stroke="#a81010" stroke-width="6"/>
							<path d="M434 222 724 270 722 296 424 250z" fill="#c8a888" stroke="#3e2d20" stroke-width="2"/>
							<path d="M436 232 722 280" stroke="#f0d8b8" stroke-width="4"/>
							<path d="M424 250 396 375 410 378 430 255zM722 296 695 410 680 405 708 293z" fill="#d0ac88" stroke="#3e2d20"/>
							<path d="M568 207h1M596 211h1M566 234h1M593 240h1M457 216h1M700 256h1" stroke="#e8d0b0" stroke-width="5"/>
						</g>
					{/each}

					<!-- tabs on the band -->
					{#each [[0, 0], [355, 50]] as [dx, dy]}
						<g transform="translate({dx} {dy})">
							<path d="M612 360 672 370 665 430 605 418z" fill="#f5c9a0" stroke="#3e2d20" stroke-width="2"/>
							<path d="M612 360 672 370 670 388 610 378z" fill="#5a4533"/>
							<circle cx="644" cy="394" r="5" fill="#4e3b2c"/><circle cx="638" cy="416" r="5" fill="#4e3b2c"/>
						</g>
					{/each}
					<path d="M360 395h20M418 405h20M772 428h20M835 395h20M835 438h20M877 418h20M1187 522h20M1245 532h20" stroke="#ecd2b0" stroke-width="8" stroke-linecap="round"/>

					<!-- round holes -->
					<ellipse cx="286" cy="116" rx="40" ry="35" fill="url(#hole)"/>
					<ellipse cx="170" cy="700" rx="40" ry="35" fill="url(#hole)"/>
					<ellipse cx="1418" cy="292" rx="39" ry="35" fill="url(#hole)"/>
					<ellipse cx="1308" cy="876" rx="40" ry="35" fill="url(#hole)"/>
					<ellipse cx="565" cy="324" rx="24" ry="24" fill="url(#hole)"/>
					<ellipse cx="1090" cy="405" rx="24" ry="24" fill="url(#hole)"/>
					<ellipse cx="492" cy="692" rx="24" ry="21" fill="#000"/>
					<ellipse cx="1025" cy="775" rx="24" ry="21" fill="#000"/>

					<!-- front face parts -->
					<path d="M225 772 300 785 300 838 222 824z" fill="#f0c8a0" stroke="#2c2016" stroke-width="2"/>
					<path d="M225 786 300 798 298 822 224 810z" fill="#4e3b2c"/>
					<ellipse cx="262" cy="797" rx="17" ry="8" fill="#d8b088"/>
					<path d="M410 797 535 815 530 860 408 842z" fill="#f0c8a0" stroke="#2c2016" stroke-width="2"/>
					<path d="M411 798 535 816 532 838 410 822z" fill="#4e3b2c"/>
					<path d="M1145 915 1228 930 1222 982 1145 966z" fill="#f0c8a0" stroke="#2c2016" stroke-width="2"/>
					<path d="M1146 928 1226 942 1222 966 1146 952z" fill="#4e3b2c"/>
					<ellipse cx="1186" cy="939" rx="17" ry="8" fill="#d8b088"/>
					<path d="M562 752 590 756 582 822 556 818z" fill="#c9a27c" stroke="#3e2d20"/>
					<path d="M897 802 915 805 908 870 890 866z" fill="#c9a27c" stroke="#3e2d20"/>
					<path d="M545 820 585 825 580 850 543 845z" fill="#d8b088" stroke="#3e2d20"/>
					<path d="M872 868 912 872 908 900 870 895z" fill="#d8b088" stroke="#3e2d20"/>
					<ellipse cx="385" cy="866" rx="16" ry="8" fill="#e8c8a4"/>
					<ellipse cx="650" cy="937" rx="17" ry="9" fill="#e8c8a4"/>
					<ellipse cx="792" cy="960" rx="17" ry="9" fill="#e8c8a4"/>
					<ellipse cx="1053" cy="967" rx="17" ry="9" fill="#e8c8a4"/>
					<path d="M345 848h1M345 882h1M430 860h1M430 892h1M478 868h1M478 902h1M565 882h1M563 915h1M880 930h1M880 965h1M965 942h1M963 978h1M1010 950h1M1095 965h1" stroke="#d8b890" stroke-width="5"/>

					<!-- part of the crosshair shows through as blue, white over the opening -->
					<path d="M393 607H663M770 607H1285" stroke="#fff" stroke-width="3"/>
					<path d="M299 38V150M299 270V390M299 708V760M88 607H200M663 607H770M1285 607H1464" stroke="#1a4f8a" stroke-width="3"/>
					<path d="M299 800V838" stroke="#b8c8d8" stroke-width="3"/>

					<!-- work and machine axes -->
					<path d="M795 490 540 452 482 448 540 466 795 498z" fill="#d42a2a"/>
					<path d="M640 470 700 473 725 488z" fill="#e04a4a"/>
					<path d="M791 495 795 390 788 380 800 345 812 380 805 390 801 495z" fill="#0b209a"/>
					<path d="M790 495 798 497 760 700 765 710 745 762 740 708 752 700z" fill="#38b030"/>
					<g font-family="Liberation Serif, serif" font-size="39">
						<text x="486" y="434" fill="#c82828">XM</text>
						<text x="628" y="455" fill="#c82828">XC</text>
						<text x="722" y="340" fill="#2a4dff">ZM</text>
						<text x="732" y="412" fill="#2a4dff">ZC</text>
						<text x="778" y="683" fill="#38a838">YC</text>
						<text x="756" y="808" fill="#38a838">YM</text>
					</g>
				</g>

				<!-- the little orientation triad -->
				<path d="M700 851 724 855 720 895 695 889z" fill="#a0a0a0" stroke="#777"/>
				<path d="M698 865 723 868" stroke="#d0aaa8" stroke-width="3"/><path d="M697 878 721 882" stroke="#888"/>
				<path d="M683 864 692 862 699 864 699 866 692 867z" fill="#e03028"/>
				<path d="M724 870 725 852 727 852 728 870z" fill="#12249a"/><circle cx="726" cy="852" r="3" fill="#12249a"/>
				<path d="M725 870 720 896" stroke="#3aa838" stroke-width="3"/><circle cx="726" cy="869" r="3" fill="#ddd"/>
				<text x="673" y="862" font-size="13" fill="#c82828" font-family="Liberation Serif, serif">X</text>
				<text x="722" y="845" font-size="13" fill="#1a3cff" font-family="Liberation Serif, serif">Z</text>
			</svg>

			<div class="brand">
				<svg width="74" height="84" viewBox="0 0 74 84">
					<path d="M37 1 73 21v42L37 83 1 63V21z" fill="#7fc6f8"/>
					<path d="M22 15 37 1l20 12c2 6 2 10 1 16L37 17z" fill="#a3e0fc"/>
					<path d="M51 10 73 21v30c-3 6-8 9-15 11L58 27c0-7-2-12-7-17z" fill="#3fa0e4"/>
					<path d="M1 42c3-10 8-15 17-19l0 34c0 6 1 10 3 17L1 63z" fill="#5cc0f0"/>
					<path d="M18 56 37 66l15-9c10-2 16-5 21-13v19L37 83 21 74c-3-6-3-12-3-18z" fill="#0d9ac6"/>
					<path d="M37 18 57 29v24L37 65 17 53V29z" fill="#fff"/>
					<path d="M37 22 54 31 37 41 20 31z" fill="#85c8f8"/>
					<path d="M20 31 37 41V60L20 50z" fill="#5cc0f0"/>
					<path d="M54 31 37 41V60L54 50z" fill="#0d9ac6"/>
				</svg>
			</div>
		</main>
	</div>

	<div class="dlg">
		<div class="ttl">
			<svg width="16" height="16" viewBox="0 0 16 16"><path d="M8 1l1.500 2 2.500-.7.500 2.500 2.500.7-.7 2.500 1.700 1.500-1.700 1.500.7 2.500-2.500.7-.5 2.500L9.500 14 8 15.500 6.500 14l-2.500.7-.5-2.500L1 11.500l.7-2.500L0 8l1.700-1.500L1 4l2.500-.7.500-2.500 2.500 1z" transform="translate(1.500 1) scale(.82)" fill="#eee"/><circle cx="8" cy="7.500" r="3" fill="#222"/></svg>
			<span>1zc1-L</span>
			<b><svg width="12" height="12" viewBox="0 0 12 12"><path d="M1.500 1.500l9 9M10.500 1.500l-9 9" stroke="#fff" stroke-width="2.800"/></svg></b>
		</div>
		<div class="dbody">
			<div class="tabs"><span class="tab act">主要</span><span class="tab">更多</span></div>
			<div class="panel">
				<div class="fr h30 gap4"><label class="up">几何体</label>{@render combo('L2', true)}<span class="btns">{@render ib(B.geo[0])}{@render ib(B.geo[1])}</span></div>
				<div class="fr h30 gap4"><label class="up">刀具</label>{@render combo('D20R0.8 (铣刀', true)}<span class="btns">{@render ib(B.tool[0])}{@render ib(B.tool[1])}</span></div>
				<div class="fr h30 gap4"><label class="lo">指定部件</label><span class="btns">{@render ib(B.part[0])}{@render ib(B.part[1])}</span></div>
				<div class="fr h30 gap4"><label class="lo">指定检查</label><span class="btns">{@render ib(B.check[0])}{@render ib(B.check[1])}</span></div>
				<div class="fr h30 gap4"><label class="lo">指定切削区域</label><span class="btns">{@render ib(B.area[0])}{@render ib(B.area[1])}</span></div>
				<div class="fr h30 gap4"><label class="lo">指定修剪边界</label><span class="btns">{@render ib(B.trim[0])}{@render ib(B.trim[1])}</span></div>
				<div class="fr h30 gap4"><label class="lo">指定前一个 <em class="ipw">IPW</em></label><span class="btns">{@render ib(B.ipw[0])}{@render ib(B.ipw[1])}</span></div>

				<div class="fr m5" style:height="23px"><label>切削模式</label><span class="w128">{@render combo('跟随部件', false, true)}</span></div>
				<div class="fr gap4" style:height="21px"><label>步距</label><span class="w128">{@render combo('刀具平直百分比')}</span></div>
				<div class="fr m5" style:height="18px"><label>平面直径百分比</label><input class="num" value="65.0000" /></div>
				<div class="fr gap4" style:height="21px"><label>每刀的公共深度</label><span class="w128">{@render combo('恒定')}</span></div>
				<div class="fr m7" style:height="19px"><label>最大距离</label><input class="num" value="0.3000" /><span class="unit">{@render combo('mm', true)}</span></div>
				<div class="fr m5" style:height="16px"><span class="chk"><svg width="12" height="12" viewBox="0 0 12 12"><path d="M1 6l4 4 6-9" fill="none" stroke="#fff" stroke-width="2.200"/></svg></span><label class="cl">使底面余量与侧面余量一致</label></div>
				<div class="fr gap4" style:height="22px"><label class="hi">部件侧面余量</label><input class="num" value="0.1500" />{@render lockb()}</div>
				<div class="fr gap4" style:height="21px"><label>光顺</label><span class="w128">{@render combo('所有刀路')}</span></div>
				<div class="fr m6" style:height="19px"><label>半径</label><input class="num" value="0.2000" /><span class="unit">{@render combo('mm', true)}</span></div>
				<div class="fr gap4" style:height="19px"><label>步距限制</label><input class="num" value="100.0000" /></div>

				<div class="fr h30 gap4"><label class="ne">切削层</label><span class="btns">{@render ib({ i: 'layer' })}</span></div>
				<div class="fr h30 gap4"><label class="ne">切削参数</label><span class="btns">{@render ib({ i: 'param' })}</span></div>
				<div class="fr h30 gap4"><label class="ne">非切削移动</label><span class="btns">{@render ib({ i: 'nocut' })}</span></div>
				<div class="fr h30 gap4"><label class="ne">进给率和速度</label><span class="btns">{@render ib({ i: 'feed' })}</span></div>
				<div class="fr gap4" style:height="22px"><label class="hi">切削进给</label><input class="num" value="3200.000" /><span class="unit">{@render combo('mmpr', true)}</span>{@render lockb()}</div>
				<div class="tools">{#each bottoms as b}{@render ib(b)}{/each}</div>
			</div>
			<div class="foot">
				<button class="ok">确定</button>
				<button class="no">取消</button>
			</div>
		</div>
		<div class="dend"></div>
	</div>

	<!-- the two red callout arrows sit on top of everything -->
	<svg class="callouts" width="1228" height="896" viewBox="0 0 1228 896">
		<path d="M163 563 184 571 177 575 345 795 344.500 795.500 172 581 167 583z" fill="#f04438"/>
		<path d="M421 288 438 295 433 300 773 694 772.500 694.500 427 303 425 306z" fill="#f04438"/>
	</svg>
</div>

<style>
	:global(body) {
		margin: 0;
		background: #d6d6d6;
	}
	.app {
		position: relative;
		width: 1228px;
		height: 896px;
		overflow: hidden;
		font-family: "Noto Sans CJK SC", "Liberation Sans", sans-serif;
		font-size: 12px;
		color: #111;
	}
	.ico {
		display: block;
		flex: none;
	}

	/* toolbars */
	header {
		height: 126px;
		background: #d9d9d9;
		display: flex;
		flex-direction: column;
	}
	.topstrip {
		height: 4px;
		border-bottom: 1px solid #b4b4b4;
		display: flex;
		gap: 148px;
		background: #dcdcdc;
	}
	.topstrip i {
		width: 1px;
		background: #aaa;
	}
	.bar {
		display: flex;
		align-items: center;
		flex: none;
		overflow: hidden;
	}
	.r1 {
		height: 33px;
		background: linear-gradient(#dcdcdc, #cfcfcf);
	}
	.r2 {
		height: 34px;
		background: linear-gradient(#dadada, #cbcbcb);
		border-top: 1px solid #e8e8e8;
		border-bottom: 1px solid #a8a8a8;
		box-shadow: 0 2px 2px #b0b0b0;
	}
	.tico {
		flex: none;
		filter: saturate(.65);
		opacity: .8;
	}
	.tico.on {
		filter: none;
		opacity: 1;
	}
	.tsep {
		flex: none;
		width: 1px;
		height: 30px;
		background: #efefef;
		box-shadow: -1px 0 #b8b8b8;
	}
	.tdots {
		flex: none;
		width: 3px;
		height: 24px;
		background: repeating-linear-gradient(#f4f4f4 0 2px, #9a9a9a 2px 3px, transparent 3px 4px);
	}
	.tdrop {
		flex: none;
		width: 0;
		margin-right: 7px;
		border: 3.500px solid transparent;
		border-top: 4px solid #111;
		border-bottom: 0;
	}
	.ttxt {
		flex: none;
		color: #8c8c8c;
		white-space: nowrap;
		font-size: 12px;
	}
	.addr {
		height: 28px;
		display: flex;
		align-items: center;
		background: #d9d9d9;
		border-bottom: 1px solid #b8b8b8;
		padding-top: 2px;
		box-sizing: border-box;
	}
	.ac {
		height: 19px;
		box-sizing: border-box;
		border: 1px solid #adadad;
		border-radius: 4px;
		display: flex;
		align-items: center;
		justify-content: flex-end;
		color: #8c8c8c;
		font-size: 12px;
		background: #d4d4d4;
	}
	.ac span {
		margin-right: auto;
	}
	.a1 {
		width: 92px;
		margin-left: -1px;
	}
	.a2 {
		width: 153px;
		margin-left: 9px;
		padding-left: 5px;
	}
	.da {
		width: 14px;
		height: 17px;
		background: linear-gradient(#ededed, #c9c9c9);
		position: relative;
		border-left: 1px solid #bbb;
	}
	.da::after {
		content: "";
		position: absolute;
		left: 2px;
		top: 6px;
		border: 5px solid transparent;
		border-top: 5px solid #999;
		border-bottom: 0;
	}
	.ai {
		margin-left: 8px;
	}
	.asep {
		width: 1px;
		height: 26px;
		margin: 0 5px 0 7px;
		background: #eee;
		box-shadow: -1px 0 #bbb;
	}
	.cur {
		flex: 1;
		background: #d6d6d6;
		border-bottom: 2px solid #8c8c8c;
		display: flex;
		padding-left: 742px;
	}
	.cur span {
		border-left: 1px solid #eee;
		padding-left: 3px;
		font-weight: 700;
		font-size: 13px;
		line-height: 20px;
		color: #111;
	}
	.cur em {
		font-style: normal;
		font-family: "Liberation Sans", sans-serif;
		font-weight: 700;
		font-size: 12px;
		letter-spacing: .15px;
	}

	/* main area */
	.work {
		display: flex;
		height: 770px;
	}
	.nav {
		width: 625px;
		flex: none;
		background: #f0f0f0;
		display: flex;
		flex-direction: column;
	}
	h2 {
		margin: 0;
		height: 32px;
		box-sizing: border-box;
		padding-left: 14px;
		font-size: 13px;
		line-height: 32px;
		font-weight: 700;
		background: #f2f2f2;
		border-bottom: 1px solid #8a8a8a;
	}
	.grid {
		display: grid;
		grid-template-columns: 185px 25px 23px 70px 14px 66px 50px 58px 63px 46px 16px 9px;
		height: 20px;
		box-sizing: border-box;
	}
	.head {
		flex: none;
		background: linear-gradient(#f6f6f6, #e2e2e2);
		border-bottom: 1px solid #b0b0b0;
		font-size: 13px;
		line-height: 19px;
	}
	.head span {
		border-right: 1px solid #c4c4c4;
		text-align: center;
		box-sizing: border-box;
	}
	.head .nm {
		text-align: left;
		margin-left: -10px;
		width: 195px;
	}
	.head .lft {
		text-align: left;
		padding-left: 6px;
	}
	.body {
		position: relative;
		height: 669px;
		overflow: hidden;
		background: #fff;
	}
	.vline {
		position: absolute;
		left: 185px;
		top: 0;
		bottom: 0;
		width: 1px;
		background: #111;
	}
	.row {
		background: #fff;
		border-bottom: 1px solid #e6e6e6;
		font: italic 12px "Liberation Sans", sans-serif;
		letter-spacing: .45px;
		color: #3a3f4a;
	}
	.row.alt {
		background: #f5f5f5;
	}
	.row.blue {
		color: #3f80d0;
	}
	.row.teal {
		color: #0f5f78;
	}
	.row.sel {
		color: #fff;
		background: #fff;
	}
	.row.sel .c,
	.row.sel .tree > .t {
		background: #0a2463;
	}
	.t {
		padding-top: 1px;
	}
	.c {
		border-right: 1px solid #e6e6e6;
		display: flex;
		align-items: center;
		justify-content: center;
		white-space: nowrap;
		overflow: hidden;
		line-height: 19px;
		height: 19px;
	}
	.c.lft {
		justify-content: flex-start;
		padding-left: 6px;
		letter-spacing: .55px;
	}
	.tree {
		display: flex;
		align-items: center;
		position: relative;
		height: 19px;
		white-space: nowrap;
		background: repeating-linear-gradient(#8a8a8a 0 1px, transparent 1px 2px) 14px 0 / 1px 100% no-repeat;
	}
	.exp {
		position: absolute;
		left: 10px;
		top: 5px;
		width: 7px;
		height: 7px;
		border: 1px solid #999;
		border-radius: 2px;
		background: linear-gradient(#999, #999) center / 5px 1px no-repeat #fff;
	}
	.dash {
		position: absolute;
		left: 20px;
		top: 9px;
		width: 4px;
		border-top: 1px dotted #888;
	}
	.bulb {
		position: absolute;
		left: 27px;
		top: 0;
	}
	.st {
		position: absolute;
		left: 25px;
		top: 2px;
	}
	.st2 {
		position: absolute;
		left: 44px;
		top: 2px;
	}
	.fold {
		position: absolute;
		left: 41px;
		top: 3px;
	}
	.elbow {
		position: absolute;
		left: 33px;
		top: -1px;
		width: 9px;
		height: 10px;
		border-left: 1px dotted #888;
		border-bottom: 1px dotted #888;
	}
	.elbow.cont::after {
		content: "";
		position: absolute;
		left: -1px;
		top: 10px;
		height: 10px;
		border-left: 1px dotted #888;
	}
	.ck {
		position: absolute;
		left: 44px;
		top: 4px;
	}
	.opi {
		position: absolute;
		left: 59px;
		top: 0;
		z-index: 1;
	}
	.tree .t {
		position: absolute;
		left: 79px;
	}
	.tree .gt {
		left: 60px;
		letter-spacing: 1.2px;
	}
	.row.sel .tree .t {
		left: 75px;
		padding-left: 4px;
		width: 106px;
		height: 18px;
		overflow: hidden;
	}
	.hatch {
		background: repeating-conic-gradient(#c8c8c8 0 25%, #f0f0f0 0 50%) 0 0 / 2px 2px;
	}
	.hs {
		flex: none;
		height: 16px;
		display: flex;
		background: #d8d5cd;
		border-top: 1px solid #999;
		border-bottom: 1px solid #999;
		box-sizing: border-box;
		align-items: stretch;
		padding-left: 2px;
		padding-right: 9px;
		font-size: 10px;
	}
	.thumb {
		flex: 1;
		background: linear-gradient(#eeebe3, #d4d0c6);
		border-left: 1px solid #555;
		border-right: 1px solid #aaa;
	}
	.hs b {
		width: 8px;
		line-height: 13px;
		font-weight: 400;
		text-align: center;
		color: #222;
	}
	.split {
		flex: none;
		height: 17px;
		background: #f0f0f0;
		border-bottom: 1px solid #e0e0e0;
		display: flex;
		gap: 5px;
		padding-top: 3px;
		box-sizing: border-box;
	}
	.split i {
		width: 235px;
		height: 3px;
		background: #fafafa;
		border: 1px solid #bbb;
	}
	.split i + i {
		width: 380px;
	}
	.dep {
		flex: 1;
		display: flex;
		justify-content: space-between;
		background: linear-gradient(#e8e8e8, #d8d8d8);
		font-size: 12px;
		font-weight: 700;
		line-height: 16px;
		padding-right: 14px;
	}
	.dep span {
		margin-left: -7px;
	}
	.dep b {
		color: #333;
	}
	.strip {
		width: 37px;
		flex: none;
		box-sizing: border-box;
		border-left: 3px solid #8c8c8c;
		background: #d0d0d0;
		display: flex;
		flex-direction: column;
		align-items: center;
		gap: 7px;
		padding-top: 6px;
		height: 770px;
	}
	.grip {
		width: 24px;
		height: 0;
		border-top: 2px dotted #888;
		margin-bottom: -7px;
		margin-top: 3px;
	}
	.si {
		flex: none;
		opacity: .85;
	}
	.si.first {
		margin-top: 8px;
	}
	.si.second {
		margin-top: -3px;
	}
	.vt {
		flex: none;
		writing-mode: vertical-rl;
		height: 51px;
		font-size: 12px;
		line-height: 14px;
		color: #a0a0a0;
	}
	.tri {
		width: 0;
		border: 4px solid transparent;
		border-right: 5px solid #111;
		border-left: 0;
		margin-left: -16px;
		margin-top: 2px;
	}
	.view {
		position: relative;
		flex: 1;
		background: #000;
		border-left: 1px solid #f0b880;
		border-top: 1px solid #f0a050;
		box-sizing: border-box;
	}
	.scene {
		position: absolute;
		left: -1px;
		top: -1px;
		display: block;
	}
	.brand {
		position: absolute;
		left: 261px;
		top: 667px;
		width: 299px;
		height: 98px;
		background: #fff;
		padding: 8px 0 0 21px;
		box-sizing: border-box;
	}

	/* floating dialog */
	.dlg {
		position: absolute;
		z-index: 5;
		left: 309px;
		top: 2px;
		width: 312px;
		height: 801px;
		display: flex;
		flex-direction: column;
		border-radius: 7px 7px 5px 5px;
		overflow: hidden;
	}
	.ttl {
		flex: none;
		height: 21px;
		background: linear-gradient(#3a3a3a, #111 45%, #000);
		display: flex;
		align-items: center;
		color: #fff;
		padding-left: 3px;
		font: 700 13px "DejaVu Sans", sans-serif;
		letter-spacing: .5px;
	}
	.ttl span {
		margin-left: 3px;
		border-left: 1px solid #555;
		padding-left: 9px;
		flex: 1;
		line-height: 21px;
	}
	.ttl b {
		width: 20px;
		height: 21px;
		display: flex;
		align-items: center;
		justify-content: center;
		border-left: 1px solid #555;
		margin-right: 1px;
	}
	.dbody {
		flex: 1;
		background: #e9e9e9;
		border-left: 1px solid #777;
		border-right: 1px solid #777;
		padding: 9px 13px 0 10px;
		display: flex;
		flex-direction: column;
		min-height: 0;
	}
	.tabs {
		flex: none;
		height: 22px;
		display: flex;
		align-items: flex-end;
		position: relative;
		z-index: 1;
	}
	.tab {
		width: 45px;
		height: 20px;
		box-sizing: border-box;
		text-align: center;
		line-height: 20px;
		border: 1px solid #888;
		border-bottom: 0;
		border-radius: 4px 4px 0 0;
		background: linear-gradient(#f0f0f0, #b8b8b8);
		font-size: 12px;
	}
	.tab.act {
		width: 50px;
		height: 23px;
		margin-bottom: -1px;
		background: #e9e9e9;
		line-height: 23px;
	}
	.panel {
		height: 693px;
		flex: none;
		box-sizing: border-box;
		border: 1px solid #8a8a8a;
		border-right-color: #999;
		padding: 8px 7px 0 4px;
		box-shadow: inset -1px -1px #f6f6f6, 1px 1px #f6f6f6;
	}
	.fr {
		display: flex;
		align-items: center;
		gap: 4px;
	}
	.fr label {
		margin-right: auto;
		white-space: nowrap;
		font-size: 12px;
	}
	.fr label.up {
		align-self: flex-start;
		margin-top: 3px;
		margin-right: 0;
		width: 103px;
	}
	.fr label.lo {
		padding-top: 2px;
	}
	.fr label.ne {
		margin-top: -2px;
	}
	.fr label.hi {
		margin-top: -4px;
	}
	.fr label.cl {
		margin-left: 1px;
	}
	.h30 {
		height: 30px;
	}
	.gap4 {
		margin-bottom: 4px;
	}
	.m5 {
		margin-bottom: 5px;
	}
	.m6 {
		margin-bottom: 6px;
	}
	.m7 {
		margin-bottom: 7px;
	}
	.ipw {
		font: italic 11px "Liberation Sans", sans-serif;
		color: #31557a;
		margin-left: 2px;
		letter-spacing: .5px;
	}
	.btns {
		display: flex;
		gap: 4px;
		flex: none;
		margin-left: auto;
	}
	.ib {
		width: 30px;
		height: 30px;
		padding: 0;
		box-sizing: border-box;
		border: 1px solid #6a6a6a;
		border-radius: 5px;
		background: linear-gradient(#f4f4f4 0 45%, #c8c8c8);
		box-shadow: inset 0 1px #999;
		display: flex;
		align-items: center;
		justify-content: center;
	}
	.ib.off {
		border-color: #b8b8b8;
		box-shadow: none;
		background: linear-gradient(#f2f2f2, #dcdcdc);
	}
	.ib.off :global(svg) {
		opacity: .7;
	}
	.cb {
		flex: 1;
		height: 100%;
		max-height: 23px;
		min-width: 0;
		box-sizing: border-box;
		border: 1px solid #808080;
		border-radius: 4px;
		background: #fff;
		display: flex;
		overflow: hidden;
	}
	.h30 .cb {
		align-self: flex-start;
		margin-top: 1px;
		height: 20px;
		width: 104px;
		flex: none;
	}
	.cbv {
		flex: 1;
		min-width: 0;
		overflow: hidden;
		white-space: nowrap;
		padding-left: 2px;
		display: flex;
		align-items: center;
		gap: 3px;
		font-size: 12px;
	}
	.cb.ital .cbv {
		font: italic 12px "Liberation Sans", "Noto Sans CJK SC", sans-serif;
		padding-left: 4px;
		letter-spacing: .7px;
		color: #111;
	}
	.ar {
		flex: none;
		width: 15px;
		background: linear-gradient(#2c6cd0 0, #3f86dc 50%, #b8dcf6);
		border-left: 1px solid #9ab;
		display: flex;
		align-items: center;
		justify-content: center;
	}
	.ar i {
		border: 5.500px solid transparent;
		border-top: 6px solid #111;
		border-bottom: 0;
	}
	.w128 {
		width: 128px;
		height: 100%;
		display: flex;
		flex: none;
	}
	.unit {
		width: 56px;
		height: 19px;
		display: flex;
		flex: none;
	}
	.num {
		width: 72px;
		flex: none;
		height: 19px;
		box-sizing: border-box;
		border: 1px solid #808080;
		border-radius: 4px;
		text-align: right;
		padding: 0 2px 0 0;
		font: 13px "Liberation Sans", sans-serif;
		letter-spacing: 1px;
		color: #111;
		background: #fff;
		outline: none;
	}
	.lock {
		width: 22px;
		height: 22px;
		flex: none;
		padding: 0;
		display: flex;
		align-items: center;
		justify-content: center;
		border: 1px solid #777;
		border-radius: 4px;
		background: linear-gradient(#f2f2f2, #c8c8c8);
	}
	.chk {
		width: 16px;
		height: 16px;
		margin-left: 1px;
		box-sizing: border-box;
		border-radius: 3px;
		border: 1px solid #6a9ad0;
		background: #2467c0;
		display: flex;
		align-items: center;
		justify-content: center;
	}
	.tools {
		display: flex;
		justify-content: center;
		gap: 4px;
	}
	.foot {
		flex: none;
		margin-top: 9px;
		margin-right: -6px;
		margin-left: -10px;
		border-top: 1px solid #fafafa;
		box-shadow: 0 -1px #c4c4c4;
		height: 33px;
		display: flex;
		justify-content: flex-end;
		gap: 7px;
		padding: 6px 9px 0 0;
		box-sizing: border-box;
	}
	.foot button {
		width: 52px;
		height: 21px;
		padding: 0;
		border: 1px solid #6a6a6a;
		border-radius: 4px;
		font: 12px "Noto Sans CJK SC", sans-serif;
		color: #111;
		background: linear-gradient(#f4f4f4, #c8c8c8);
	}
	.foot .ok {
		background: linear-gradient(#a8e8a0, #4dba4a 55%, #a8e8a0);
		border-color: #2f8a30;
	}
	.dend {
		flex: none;
		height: 7px;
		background: linear-gradient(#333, #000);
	}
	.callouts {
		position: absolute;
		z-index: 6;
		left: 0;
		top: 0;
		pointer-events: none;
	}
</style>
